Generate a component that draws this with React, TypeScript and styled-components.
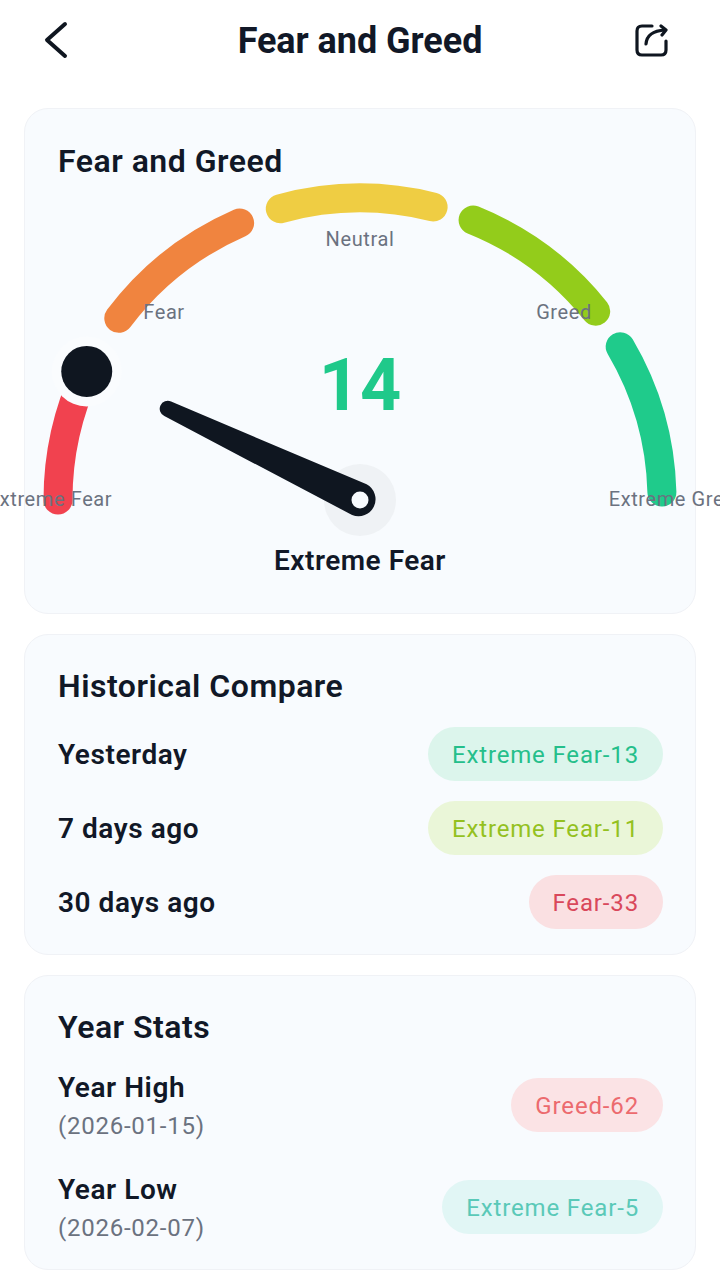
import React from 'react';
import styled, { createGlobalStyle } from 'styled-components';

const GlobalStyle = createGlobalStyle`
    html, body {
        margin: 0;
        padding: 0;
        background: #ffffff;
        overflow-x: hidden;
    }
    body {
        font-family: Roboto, "Liberation Sans", sans-serif;
        color: #111827;
    }
`

const Page = styled.div`
    width: 720px;
    min-height: 1282px;
    box-sizing: border-box;
    padding: 0 24px;
    display: flex;
    flex-direction: column;
`

const Header = styled.header`
    height: 108px;
    margin: 0 -24px;
    padding: 0 42px 28px;
    box-sizing: border-box;
    display: grid;
    grid-template-columns: 1fr auto 1fr;
    align-items: center;
`

const HeaderTitle = styled.h1`
    margin: 1px 0 0;
    font-size: 36px;
    line-height: 42px;
    font-weight: 700;
    letter-spacing: -0.05px;
`

const IconButton = styled.div<{ $end?: boolean }>`
    display: flex;
    justify-content: ${(p) => (p.$end ? 'flex-end' : 'flex-start')};
    padding-right: ${(p) => (p.$end ? 10 : 0)}px;
`

const Card = styled.section<{ $top: number }>`
    box-sizing: border-box;
    background: #f8fbfe;
    border: 1px solid #f0f2f6;
    border-radius: 24px;
    padding: ${(p) => p.$top}px 32px 25px 33px;
    margin-bottom: 20px;
    display: flex;
    flex-direction: column;
`

const CardTitle = styled.h2`
    margin: 0;
    font-size: 32px;
    line-height: 38px;
    font-weight: 600;
    letter-spacing: 0.5px;
`

const GaugeBox = styled.div`
    position: relative;
    height: 360px;
`

const GaugeSvg = styled.svg`
    display: block;
    overflow: visible;
`

const GaugeLabel = styled.text`
    font-family: Roboto, sans-serif;
    font-size: 20px;
    letter-spacing: 0.6px;
    fill: #6b7280;
    text-anchor: middle;
`

const GaugeValue = styled.div`
    position: absolute;
    left: 0;
    right: 1px;
    top: 166px;
    text-align: center;
    font-size: 72px;
    line-height: 80px;
    font-weight: 700;
    color: #1fc98a;
`

const GaugeStatus = styled.div`
    text-align: center;
    font-size: 28px;
    line-height: 34px;
    font-weight: 600;
    letter-spacing: 0.5px;
    margin-top: 4px;
    margin-bottom: 10px;
    margin-right: 1px;
`

const RowList = styled.div<{ $gap: number; $top: number; $bottom: number }>`
    display: flex;
    flex-direction: column;
    gap: ${(p) => p.$gap}px;
    padding-top: ${(p) => p.$top}px;
    padding-bottom: ${(p) => p.$bottom}px;
`

const Row = styled.div`
    display: flex;
    align-items: center;
    justify-content: space-between;
`

const RowLabel = styled.div`
    font-size: 28px;
    line-height: 34px;
    font-weight: 600;
    letter-spacing: 0.55px;
`

const HistoryLabel = styled(RowLabel)`
    margin-top: 2px;
`

const RowDate = styled.div`
    font-size: 24px;
    line-height: 26px;
    margin-top: 8px;
    color: #6b7280;
    letter-spacing: 0.75px;
`

const Pill = styled.div<{ $bg: string; $fg: string }>`
    box-sizing: border-box;
    height: 54px;
    padding: 2px 24px 0;
    border-radius: 27px;
    display: flex;
    align-items: center;
    font-size: 24px;
    letter-spacing: 0.85px;
    background: ${(p) => p.$bg};
    color: ${(p) => p.$fg};
`

const CX = 302
const CY = 320
const R = 302

const point = (deg: number) => {
    const a = (deg * Math.PI) / 180
    return { x: CX - R * Math.cos(a), y: CY - R * Math.sin(a) }
}

const arc = (from: number, to: number) => {
    const a = point(from)
    const b = point(to)
    return `M${a.x.toFixed(1)} ${a.y.toFixed(1)}A${R} ${R} 0 0 1 ${b.x.toFixed(1)} ${b.y.toFixed(1)}`
}

// tapered needle: hull of the tip circle and the hub circle
const needle = (tx: number, ty: number, tr: number, br: number) => {
    const dx = CX - tx
    const dy = CY - ty
    const d = Math.hypot(dx, dy)
    const base = Math.atan2(dy, dx)
    const off = Math.acos((tr - br) / d)
    const n1 = { x: Math.cos(base + off), y: Math.sin(base + off) }
    const n2 = { x: Math.cos(base - off), y: Math.sin(base - off) }
    const f = (v: number) => v.toFixed(1)
    return [
        `M${f(tx + n2.x * tr)} ${f(ty + n2.y * tr)}`,
        `L${f(CX + n2.x * br)} ${f(CY + n2.y * br)}`,
        `A${br} ${br} 0 0 1 ${f(CX + n1.x * br)} ${f(CY + n1.y * br)}`,
        `L${f(tx + n1.x * tr)} ${f(ty + n1.y * tr)}`,
        `A${tr} ${tr} 0 0 1 ${f(tx + n2.x * tr)} ${f(ty + n2.y * tr)}Z`,
    ].join('')
}

const segments = [
    { from: 0, to: 25.2, color: '#f1424f' },
    { from: 37, to: 66.5, color: '#f0843f' },
    { from: 74.7, to: 104, color: '#efcd43' },
    { from: 112, to: 141.3, color: '#93cc1b' },
    { from: 149.5, to: 178.5, color: '#1fcb8b' },
]

const labels = [
    { text: 'Extreme Fear', x: -8, y: 326 },
    { text: 'Fear', x: 106, y: 139 },
    { text: 'Neutral', x: 302, y: 66 },
    { text: 'Greed', x: 506, y: 139 },
    { text: 'Extreme Greed', x: 620, y: 326 },
]

const historical = [
    { label: 'Yesterday', value: 'Extreme Fear-13', bg: '#dcf5ec', fg: '#25bf8b' },
    { label: '7 days ago', value: 'Extreme Fear-11', bg: '#eaf6d8', fg: '#94c11f' },
    { label: '30 days ago', value: 'Fear-33', bg: '#fae0e2', fg: '#d9485b' },
]

const yearStats = [
    { label: 'Year High', date: '(2026-01-15)', value: 'Greed-62', bg: '#fbe3e5', fg: '#ec6a6e' },
    { label: 'Year Low', date: '(2026-02-07)', value: 'Extreme Fear-5', bg: '#e1f6f5', fg: '#5ac9b8' },
]

const Gauge = ({ value }: { value: number }) => {
    const thumb = point((value / 100) * 180)
    return (
        <GaugeSvg width="604" height="360">
            {segments.map((s) => (
                <path key={s.color} d={arc(s.from, s.to)} fill="none" stroke={s.color} strokeWidth="29" strokeLinecap="round" />
            ))}
            {labels.map((l) => (
                <GaugeLabel key={l.text} x={l.x} y={l.y}>{l.text}</GaugeLabel>
            ))}
            <circle cx={thumb.x} cy={thumb.y} r="35" fill="#fafcfe" />
            <circle cx={thumb.x} cy={thumb.y} r="25.5" fill="#0f1620" />
            <circle cx={CX} cy={CY} r="36" fill="#eff2f5" />
            <path d={needle(110, 229, 8, 17)} fill="#0f1620" />
            <circle cx={CX} cy={CY} r="8.5" fill="#f8fbfe" />
        </GaugeSvg>
    )
}

const App = () => {
    return (
        <Page>
            <GlobalStyle />
            <Header>
                <IconButton>
                    <svg width="28" height="40" viewBox="0 0 28 40" fill="none" stroke="#0f1620" strokeWidth="4" strokeLinecap="round" strokeLinejoin="round">
                        <path d="M23 4 L5 20 L23 36" />
                    </svg>
                </IconButton>
                <HeaderTitle>Fear and Greed</HeaderTitle>
                <IconButton $end>
                    <svg width="34" height="34" viewBox="0 0 34 34" fill="none" stroke="#0f1620" strokeWidth="3.2" strokeLinecap="round" strokeLinejoin="round">
                        <path d="M18 3 H8 Q3 3 3 8 V27 Q3 32 8 32 H27 Q32 32 32 27 V18" />
                        <path d="M12 21 Q13 8 31 7" />
                        <path d="M27 3 L32 7 L28 12" />
                    </svg>
                </IconButton>
            </Header>

            <Card $top={33}>
                <CardTitle>Fear and Greed</CardTitle>
                <GaugeBox>
                    <Gauge value={14} />
                    <GaugeValue>14</GaugeValue>
                </GaugeBox>
                <GaugeStatus>Extreme Fear</GaugeStatus>
            </Card>

            <Card $top={32}>
                <CardTitle>Historical Compare</CardTitle>
                <RowList $gap={20} $top={22} $bottom={0}>
                    {historical.map((h) => (
                        <Row key={h.label}>
                            <HistoryLabel>{h.label}</HistoryLabel>
                            <Pill $bg={h.bg} $fg={h.fg}>{h.value}</Pill>
                        </Row>
                    ))}
                </RowList>
            </Card>

            <Card $top={32}>
                <CardTitle>Year Stats</CardTitle>
                <RowList $gap={34} $top={25} $bottom={3}>
                    {yearStats.map((y) => (
                        <Row key={y.label}>
                            <div>
                                <RowLabel>{y.label}</RowLabel>
                                <RowDate>{y.date}</RowDate>
                            </div>
                            <Pill $bg={y.bg} $fg={y.fg}>{y.value}</Pill>
                        </Row>
                    ))}
                </RowList>
            </Card>
        </Page>
    )
}

export default App
